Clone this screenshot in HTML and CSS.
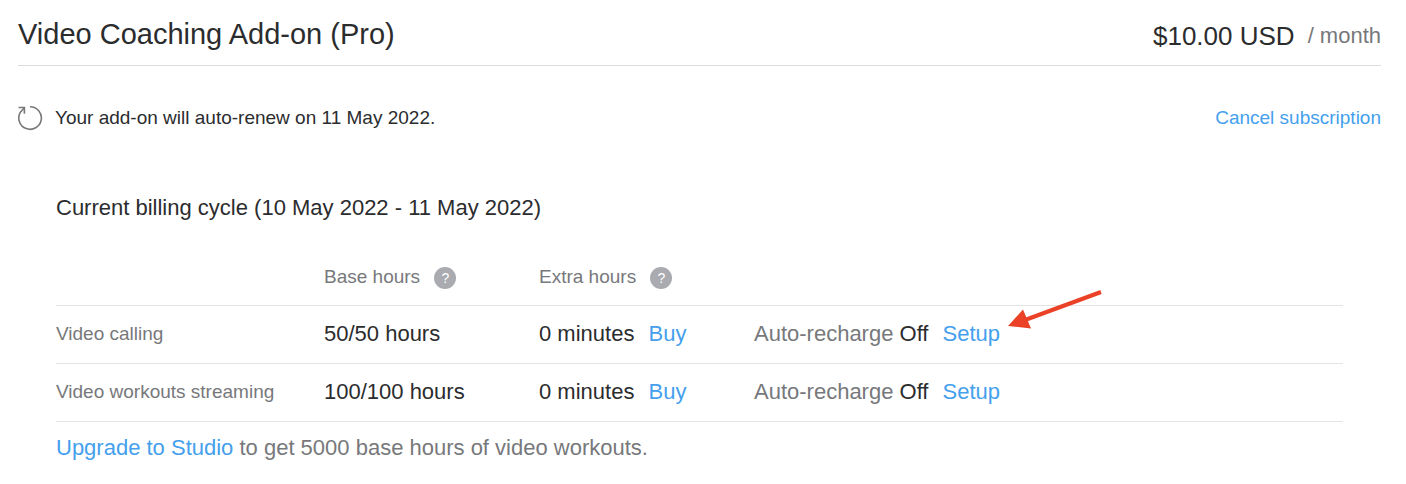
FILE: index.html
```html
<!DOCTYPE html>
<html lang="en">

<head>
    <meta charset="UTF-8">
    <meta name="viewport" content="width=device-width, initial-scale=1.0">
    <title>Video Coaching Add-on</title>
    <link rel="stylesheet" href="styles.css">
</head>

<body>

    <header class="plan-header">
        <h1>Video Coaching Add-on (Pro)</h1>
        <p class="price">$10.00 USD <span>/ month</span></p>
    </header>

    <div class="renewal">
        <svg class="renew-icon" width="25" height="26" viewBox="0 0 25 26" fill="none" stroke="#77787b" stroke-width="1.6">
            <path d="M12 1.7A11.3 11.3 0 1 1 2.4 7.2L6.4 2.8" />
            <path d="M0.5 2.5H6.4V8.8" />
        </svg>
        <p>Your add-on will auto-renew on 11 May 2022.</p>
        <a href="#">Cancel subscription</a>
    </div>

    <main class="billing">
        <h2>Current billing cycle (10 May 2022 - 11 May 2022)</h2>

        <table>
            <thead>
                <tr>
                    <td class="col-name"></td>
                    <th class="col-base" scope="col">Base hours <button class="help" type="button">?</button></th>
                    <th class="col-extra" scope="col">Extra hours <button class="help" type="button">?</button></th>
                    <td></td>
                </tr>
            </thead>
            <tbody>
                <tr>
                    <th scope="row">Video calling</th>
                    <td>50/50 hours</td>
                    <td>0 minutes <a class="action" href="#">Buy</a></td>
                    <td class="recharge">
                        <span>Auto-recharge</span> Off <a class="action" href="#">Setup</a>
                        <svg class="arrow" width="96" height="44" viewBox="0 0 96 44">
                            <path d="M93 4L17 32" stroke="#eb4126" stroke-width="4" />
                            <path d="M0 38L15 21.5L23 40.5Z" fill="#eb4126" />
                        </svg>
                    </td>
                </tr>
                <tr>
                    <th scope="row">Video workouts streaming</th>
                    <td>100/100 hours</td>
                    <td>0 minutes <a class="action" href="#">Buy</a></td>
                    <td class="recharge">
                        <span>Auto-recharge</span> Off <a class="action" href="#">Setup</a>
                    </td>
                </tr>
            </tbody>
        </table>

        <p class="upgrade"><a href="#">Upgrade to Studio</a> to get 5000 base hours of video workouts.</p>
    </main>

</body>

</html>
```

FILE: styles.css
```css
* {
    box-sizing: border-box;
}

body {
    margin: 0;
    padding: 12px 25px 0 18px;
    background-color: #fff;
    color: #2b2c2e;
    font-family: "Liberation Sans", Arial, sans-serif;
    font-size: 22px;
}

h1,
h2,
p {
    margin: 0;
    font-weight: normal;
}

a {
    color: #459fed;
    text-decoration: none;
}

.plan-header {
    display: flex;
    justify-content: space-between;
    align-items: flex-start;
    height: 54px;
    border-bottom: 1px solid #dcdcdc;
}

h1 {
    font-size: 29px;
    line-height: 44px;
}

.price {
    display: flex;
    align-items: center;
    font-size: 26px;
    line-height: 48px;
}

.price span {
    margin-left: 13px;
    color: #77787b;
    font-size: 22px;
}

.renewal {
    display: flex;
    align-items: center;
    margin-top: 38px;
    font-size: 19px;
    line-height: 28px;
}

.renew-icon {
    margin-right: 12px;
}

.renewal a {
    margin-left: auto;
}

.billing {
    padding: 62px 38px 0 38px;
}

h2 {
    font-size: 22px;
    line-height: 28px;
}

table {
    width: 100%;
    margin-top: 25px;
    border-collapse: collapse;
    table-layout: fixed;
}

th,
td {
    height: 58px;
    padding: 0;
    border-bottom: 1px solid #e4e4e4;
    text-align: left;
    vertical-align: middle;
    white-space: nowrap;
}

th {
    color: #77787b;
    font-size: 19px;
    font-weight: normal;
}

thead th {
    padding-top: 3px;
}

.col-name {
    width: 268px;
}

.col-base {
    width: 215px;
}

.col-extra {
    width: 215px;
}

.help {
    width: 22px;
    height: 22px;
    margin-left: 9px;
    padding: 0;
    border: none;
    border-radius: 50%;
    background-color: #a9abb0;
    color: #fff;
    font-family: inherit;
    font-size: 14px;
    line-height: 22px;
    cursor: pointer;
}

.action {
    margin-left: 8px;
}

.recharge {
    position: relative;
}

.recharge span {
    color: #77787b;
}

/* pointer to the setup link */
.arrow {
    position: absolute;
    left: 254px;
    top: -18px;
}

.upgrade {
    color: #77787b;
    line-height: 52px;
}

a:hover {
    text-decoration: underline;
}
```
